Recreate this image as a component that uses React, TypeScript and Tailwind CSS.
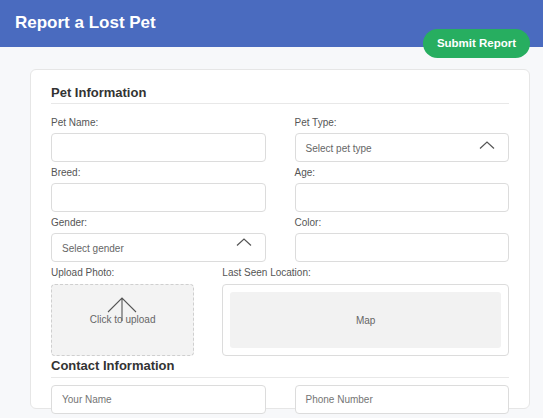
import React from "react";

function Chevron({ className }: { className: string }) {
  return (
    <svg
      width="16"
      height="8"
      viewBox="0 0 16 8"
      fill="none"
      className={className}
    >
      <path d="M1 7.5L8 1l7 6.5" stroke="#555" strokeWidth="1.2" />
    </svg>
  );
}

function Field({ label, children }: { label: string; children: React.ReactNode }) {
  return (
    <div className="flex flex-col">
      <label className="text-[10px] leading-[12px] text-[#555] mb-[4px]">{label}</label>
      {children}
    </div>
  );
}

function TextInput({ placeholder }: { placeholder?: string }) {
  return (
    <div className="h-[29px] rounded-[4px] border border-[#dcdcdc] bg-white px-[10px] flex items-center text-[10px] text-[#757575]">
      {placeholder}
    </div>
  );
}

function Select({ placeholder, chevronTop }: { placeholder: string; chevronTop: string }) {
  return (
    <div className="relative h-[29px] rounded-[4px] border border-[#dcdcdc] bg-white px-[10px] flex items-center text-[10px] text-[#666]">
      <span className="mt-[1px]">{placeholder}</span>
      <Chevron className={`absolute right-[13px] ${chevronTop}`} />
    </div>
  );
}

export default function App() {
  return (
    <div className="relative w-[543px] h-[418px] overflow-hidden bg-[#f7f8fa] font-['Liberation_Sans',Arial,sans-serif] text-[#333]">
      <header className="h-[47px] bg-[#4a6bbf] px-[15px] flex items-center">
        <h1 className="text-[17px] font-bold text-white -mt-[2px]">Report a Lost Pet</h1>
      </header>
      <button className="absolute top-[29px] right-[13px] h-[29px] w-[107px] rounded-full bg-[#27ae60] text-white text-[11.5px] font-bold">
        Submit Report
      </button>

      <main className="pt-[22px] pl-[30px] pr-[13px]">
        <div className="h-[340px] rounded-[6px] border border-[#e6e6e6] bg-white px-[20px] pt-[15px]">
          <h2 className="text-[13px] leading-[15px] font-bold text-[#333] pb-[3px] border-b border-[#e8e8e8]">
            Pet Information
          </h2>

          <div className="grid grid-cols-2 gap-x-[29px] gap-y-[5px] mt-[13px]">
            <Field label="Pet Name:">
              <TextInput />
            </Field>
            <Field label="Pet Type:">
              <Select placeholder="Select pet type" chevronTop="top-[7px]" />
            </Field>
            <Field label="Breed:">
              <TextInput />
            </Field>
            <Field label="Age:">
              <TextInput />
            </Field>
            <Field label="Gender:">
              <Select placeholder="Select gender" chevronTop="top-[4px]" />
            </Field>
            <Field label="Color:">
              <TextInput />
            </Field>
          </div>

          <div className="grid grid-cols-[1fr_2fr] gap-x-[28px] mt-[5px]">
            <div className="flex flex-col">
              <label className="text-[10px] leading-[12px] text-[#555] mb-[5px]">Upload Photo:</label>
              <div className="relative h-[72px] rounded-[4px] border border-dashed border-[#cfcfcf] bg-[#f3f3f3] flex items-center justify-center text-[10px] text-[#666]">
                <svg
                  width="30"
                  height="24"
                  viewBox="0 0 30 24"
                  fill="none"
                  className="absolute left-[55px] top-[12px]"
                >
                  <path d="M15 1v23M1 15L15 1l14 14" stroke="#555" strokeWidth="1.1" />
                </svg>
                <span className="relative -mt-[2px]">Click to upload</span>
              </div>
            </div>
            <div className="flex flex-col">
              <label className="text-[10px] leading-[12px] text-[#555] mb-[5px]">Last Seen Location:</label>
              <div className="h-[72px] rounded-[4px] border border-[#dcdcdc] bg-white p-[7px]">
                <div className="h-full rounded-[3px] bg-[#f2f2f2] flex items-center justify-center text-[10px] text-[#666]">
                  Map
                </div>
              </div>
            </div>
          </div>

          <h2 className="mt-[2px] text-[13px] leading-[15px] font-bold text-[#333] pb-[4px] border-b border-[#e8e8e8]">
            Contact Information
          </h2>

          <div className="grid grid-cols-2 gap-x-[29px] mt-[7px]">
            <TextInput placeholder="Your Name" />
            <TextInput placeholder="Phone Number" />
          </div>
        </div>
      </main>
    </div>
  );
}
